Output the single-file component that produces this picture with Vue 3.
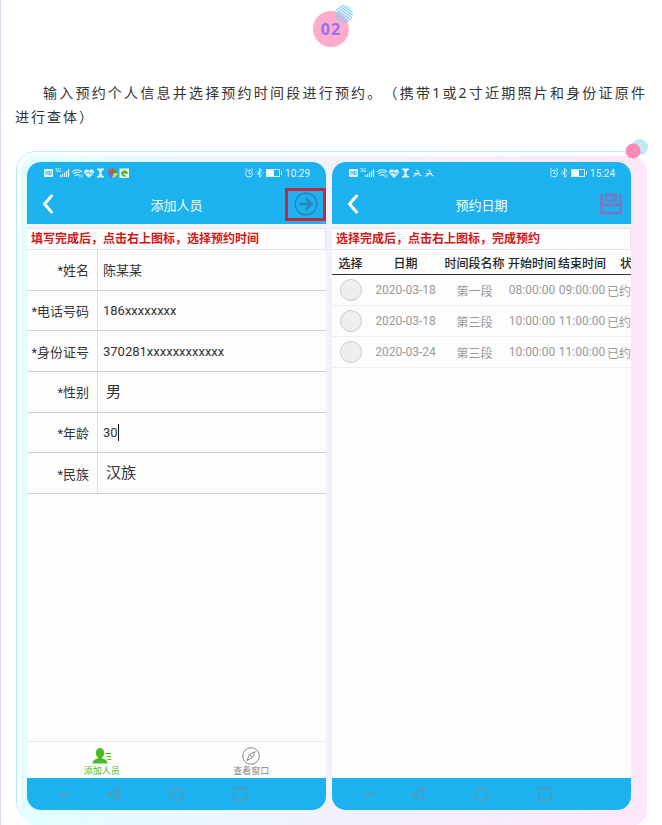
<script setup>
import { ref } from 'vue'

// 两个手机界面
const phones = [
  { id: 'person', title: '添加人员', time: '10:29', tip: '填写完成后，点击右上图标，选择预约时间' },
  { id: 'date', title: '预约日期', time: '15:24', tip: '选择完成后，点击右上图标，完成预约' },
]

// 表单字段
const fields = ref([
  { key: 'name', label: '姓名', value: '陈某某' },
  { key: 'phone', label: '电话号码', value: '186xxxxxxxx' },
  { key: 'idcard', label: '身份证号', value: '370281xxxxxxxxxxxx' },
  { key: 'sex', label: '性别', value: '男', options: ['男', '女'] },
  { key: 'age', label: '年龄', value: '30', active: true },
  { key: 'nation', label: '民族', value: '汉族', options: ['汉族', '其他'] },
])

const columns = ['选择', '日期', '时间段名称', '开始时间', '结束时间', '状态']

const slots = [
  { id: 1, date: '2020-03-18', name: '第一段', start: '08:00:00', end: '09:00:00', state: '已约6' },
  { id: 2, date: '2020-03-18', name: '第三段', start: '10:00:00', end: '11:00:00', state: '已约6' },
  { id: 3, date: '2020-03-24', name: '第三段', start: '10:00:00', end: '11:00:00', state: '已约4' },
]

const selectedSlot = ref(null)
</script>

<template>
  <main class="page">
    <div class="step">
      <span class="step-num">02</span>
      <svg class="step-dot" viewBox="0 0 18 18">
        <defs>
          <pattern id="stripe" width="3" height="2.4" patternUnits="userSpaceOnUse" patternTransform="rotate(35)">
            <rect width="3" height="1.4" fill="#8fcdf5" />
          </pattern>
        </defs>
        <circle cx="9" cy="9" r="9" fill="url(#stripe)" />
      </svg>
    </div>

    <p class="intro">输入预约个人信息并选择预约时间段进行预约。（携带1或2寸近期照片和身份证原件进行查体）</p>

    <section class="frame">
      <svg class="frame-dot" viewBox="0 0 24 22">
        <defs>
          <pattern id="stripe-small" width="2.4" height="2" patternUnits="userSpaceOnUse" patternTransform="rotate(40)">
            <rect width="2.4" height="1.2" fill="#9bd6ea" />
          </pattern>
        </defs>
        <circle cx="15" cy="8" r="8" fill="url(#stripe-small)" />
        <circle cx="8" cy="12" r="7.5" fill="#ff8ab8" />
      </svg>

      <article v-for="phone in phones" :key="phone.id" class="phone">
        <header class="phone-head">
          <div class="status">
            <svg class="status-left" width="88" height="12" viewBox="0 0 88 12">
              <rect x="1" y="2" width="9" height="8" rx="1" fill="#e3f6fd" />
              <text x="2" y="8" font-size="5" font-weight="700" fill="#1bb2ef">HD</text>
              <text x="12" y="5" font-size="5" fill="#e3f6fd">5G</text>
              <path d="M17.5 10V8M19.5 10V7M21.5 10V5.500M23.500 10V4M25.500 10V2" stroke="#e3f6fd" stroke-width="1.200" />
              <g fill="none" stroke="#e3f6fd" stroke-width="1.100">
                <path d="M29 5Q34 .5 39 5M30.500 7Q34 3.500 37 6M32 9Q34 6.500 36 8.500" />
                <path d="M37 7.500V10.500M39 7.500V10.500" stroke-width=".8" />
              </g>
              <path d="M46 11L41.500 6.500C40 4 43 .8 46 3.500C49 .8 52 4 50.500 6.500Z" fill="#e3f6fd" />
              <path d="M42 6H45L46 4.500L47 7.500L48 6H50" fill="none" stroke="#1bb2ef" stroke-width=".8" />
              <path d="M54 1.500H61V3H59.500Q59.500 5 58 6Q59.500 7 59.500 9H61V10.500H54V9H55.500Q55.500 7 57 6Q55.500 5 55.500 3H54Z" fill="#e3f6fd" />
              <template v-if="phone.id === 'person'">
                <path d="M65 6A4.500 4.500 0 0 1 70 1.500L71 6Z" fill="#e24b3b" />
                <path d="M70 1.500A4.500 4.500 0 0 1 74.500 6L70 6.500Z" fill="#32a852" />
                <path d="M74.500 6A4.500 4.500 0 0 1 69 10.500L69 6Z" fill="#e8d34a" />
                <path d="M69 10.500A4.500 4.500 0 0 1 65 5.500L71 6Z" fill="#3f7fd6" />
                <rect x="76.500" y="1.500" width="9.500" height="9.500" fill="#effce8" />
                <path d="M79 6H84A2.500 2.500 0 1 0 83 8.500" fill="none" stroke="#49a92c" stroke-width="1.500" />
              </template>
              <g v-else fill="none" stroke="#e3f6fd" stroke-width="1">
                <path d="M68 3L71 4.500L67 8M65 9Q68 10 69.500 6Q71 9 74 9M66 6.500H72" />
                <path d="M80 3L83 4.500L79 8M77 9Q80 10 81.500 6Q83 9 86 9M78 6.500H84" />
              </g>
            </svg>
            <svg class="status-right" width="38" height="12" viewBox="0 0 38 12">
              <g fill="none" stroke="#d5f1fc">
                <circle cx="5" cy="6.500" r="3.500" />
                <path d="M5 4.500V6.800H7M.8 3L2.800 1.300M7.200 1.300L9.200 3" />
                <path d="M13 4L18 8.500L15.500 10.500V1.500L18 3.500L13 8M11.500 6H12.500M18.500 6H19.500" stroke-width=".9" />
                <rect x="22.500" y="2.500" width="13" height="7" />
                <path d="M37.500 4V8" />
              </g>
              <rect x="23" y="3" width="7" height="6" fill="#f2fbff" />
            </svg>
            <span>{{ phone.time }}</span>
          </div>
          <div class="bar">
            <button class="bar-btn" aria-label="返回">
              <svg width="12" height="20" viewBox="0 0 12 20">
                <path d="M9.500 2L2.500 10L9.500 18" fill="none" stroke="#fff" stroke-width="3" stroke-linecap="round" />
              </svg>
            </button>
            <h2>{{ phone.title }}</h2>
            <button v-if="phone.id === 'person'" class="bar-btn marked" aria-label="下一步">
              <svg width="24" height="24" viewBox="0 0 24 24" fill="none" stroke="#2f80b8">
                <circle cx="12" cy="12" r="10.800" stroke-width="1.400" />
                <path d="M5.500 12H17M12 6.500L17.500 12L12 17.500" stroke-width="2.600" />
              </svg>
            </button>
            <button v-else class="bar-btn" aria-label="保存">
              <svg width="22" height="22" viewBox="0 0 22 22" fill="none" stroke="#8371bd">
                <path d="M1.500 1V20H20.500V1M1.500 12H20.500" stroke-width="2.500" />
                <path d="M6 1V7.500H16V1M5 1.500H17" stroke-width="1.800" />
                <path d="M12.500 2V6" stroke-width="2" />
              </svg>
            </button>
          </div>
        </header>

        <p class="tip">{{ phone.tip }}</p>

        <form v-if="phone.id === 'person'" class="form" @submit.prevent>
          <div v-for="field in fields" :key="field.key" class="row">
            <label :for="field.key">*{{ field.label }}</label>
            <div class="control" :class="{ active: field.active }">
              <select v-if="field.options" :id="field.key" v-model="field.value">
                <option v-for="option in field.options" :key="option">{{ option }}</option>
              </select>
              <input v-else :id="field.key" v-model="field.value" type="text">
            </div>
          </div>
        </form>

        <div v-else class="table-wrap">
          <table>
            <thead>
              <tr>
                <th v-for="column in columns" :key="column">{{ column }}</th>
              </tr>
            </thead>
            <tbody>
              <tr v-for="slot in slots" :key="slot.id">
                <td>
                  <input v-model="selectedSlot" type="radio" name="slot" :value="slot.id" :aria-label="slot.date + slot.name">
                </td>
                <td>{{ slot.date }}</td>
                <td>{{ slot.name }}</td>
                <td>{{ slot.start }}</td>
                <td>{{ slot.end }}</td>
                <td>{{ slot.state }}</td>
              </tr>
            </tbody>
          </table>
        </div>

        <nav v-if="phone.id === 'person'" class="tabs">
          <a href="#" class="on">
            <svg width="20" height="18" viewBox="0 0 20 18">
              <ellipse cx="8" cy="6" rx="4.200" ry="5" fill="currentColor" />
              <path d="M6 9H10V11.500Q15.500 12.500 15.500 16.500H.5Q.5 12.500 6 11.500Z" fill="currentColor" />
              <path d="M13.500 6.500H19M14.500 9.500H19M15.500 12.500H19" stroke="currentColor" stroke-width="1.200" />
            </svg>
            添加人员
          </a>
          <a href="#">
            <svg width="20" height="18" viewBox="0 0 20 18" fill="none" stroke="currentColor">
              <circle cx="10" cy="9" r="8.300" />
              <path d="M14 4.500L11.500 10.500L6 13.500L8.500 7.500ZM8.500 7.500L11.500 10.500" />
            </svg>
            查看窗口
          </a>
        </nav>

        <footer class="keys">
          <svg width="230" height="20" viewBox="0 0 230 20" fill="none" stroke="#5897af" stroke-width="1.500">
            <path d="M33 8L37.500 12L42 8" stroke-width="2" />
            <path d="M91.500 3.500V16.500L80.500 10Z" />
            <circle cx="149.500" cy="10" r="6.500" />
            <rect x="207" y="4" width="12" height="12" />
          </svg>
        </footer>
      </article>
    </section>
  </main>
</template>

<style>
body {
  margin: 0;
  background: #fff;
}
</style>

<style scoped>
.page {
  box-sizing: border-box;
  border-left: 1px solid #dccffa;
  padding: 11px 15px 4px 14px;
  overflow: hidden;
  font-family: Roboto, "Noto Sans CJK SC", sans-serif;
}

.step {
  position: relative;
  width: 36px;
  height: 36px;
  margin: 0 auto;
  border-radius: 50%;
  background: #ffabcc;
  text-align: center;
}

.step-num {
  color: #9371f5;
  font: 700 16px/36px "Noto Sans", sans-serif;
  letter-spacing: 1px;
}

.step-dot {
  position: absolute;
  top: -6px;
  right: -4px;
  width: 18px;
  height: 18px;
}

.intro {
  margin: 34px 0 22px;
  color: #333;
  font-family: "Noto Sans", "Noto Sans CJK SC", sans-serif;
  font-size: 14px;
  line-height: 24px;
  letter-spacing: 2px;
  text-align: justify;
  text-indent: 28px;
  text-spacing-trim: space-all;
}

.frame {
  position: relative;
  z-index: 0;
  display: flex;
  gap: 6px;
  margin: 0 5px 0 1px;
  padding: 10px;
  border: 1px solid #b2effb;
  border-radius: 20px;
}

/* 错位的渐变底 */
.frame::before {
  content: '';
  position: absolute;
  z-index: -1;
  inset: 4px -6px -6px 4px;
  border-radius: 16px;
  background: linear-gradient(to right, #e2ffff, #f1f1fd 50%, #fde6f9);
}

.frame-dot {
  position: absolute;
  top: -13px;
  right: -8px;
  width: 24px;
  height: 22px;
}

.phone {
  flex: 1;
  min-width: 0;
  min-height: 648px;
  display: flex;
  flex-direction: column;
  border-radius: 14px;
  overflow: hidden;
  background: #fdfdfd;
}

.phone-head {
  height: 62px;
  background: #1bb2ef;
  color: #fff;
}

.status {
  display: flex;
  align-items: center;
  height: 22px;
  padding: 0 16px;
  font-size: 10px;
  color: #e3f6fd;
}

.status-right {
  margin-left: auto;
  margin-right: 3px;
}

.bar {
  display: grid;
  grid-template-columns: 41px 1fr 41px;
  align-items: center;
  height: 40px;
}

.bar h2 {
  margin: 0;
  font-size: 13px;
  font-weight: 400;
  text-align: center;
}

.bar-btn {
  display: flex;
  align-items: center;
  justify-content: center;
  height: 33px;
  padding: 0;
  border: 0;
  background: none;
}

.marked {
  border: 3px solid #c4263f;
}

.tip {
  margin: 4px 0 0;
  padding: 0 4px;
  border: 1px solid #e3e3e3;
  border-left: 0;
  color: #d01818;
  font-size: 12px;
  font-weight: 700;
  line-height: 20px;
  box-shadow: 0 -4px #f0f2f3;
}

.form {
  display: grid;
  grid-auto-rows: 1fr;
  height: 244px;
}

.row {
  display: flex;
  border-bottom: 1px solid #d2d2d2;
  color: #333;
  font-size: 13px;
}

.row label {
  flex: none;
  display: flex;
  align-items: center;
  justify-content: flex-end;
  width: 62px;
  padding-right: 8px;
  border-right: 1px solid #dedede;
}

.control {
  flex: 1;
  display: flex;
  align-items: center;
  padding-left: 5px;
}

.control input,
.control select {
  width: 100%;
  padding: 0;
  border: 0;
  outline: 0;
  background: none;
  color: #333;
  font: inherit;
}

.control select {
  appearance: none;
  padding-left: 3px;
  font-size: 15px;
}

.active input {
  width: 15px;
}

.active::after {
  content: '';
  width: 1px;
  height: 17px;
  background: #111;
}

.table-wrap {
  overflow: hidden;
}

table {
  table-layout: fixed;
  width: 324px;
  border-collapse: collapse;
  font-size: 12px;
  text-align: center;
}

th,
td {
  padding: 0;
  white-space: nowrap;
}

th {
  width: 50px;
  height: 24px;
  border-bottom: 1px solid #333;
  color: #222;
  font-weight: 500;
}

th:nth-child(1) {
  width: 37px;
}

th:nth-child(2) {
  width: 73px;
}

th:nth-child(3) {
  width: 65px;
}

td {
  height: 30px;
  border-bottom: 1px solid #eee;
  color: #999;
}

td:last-child {
  text-align: left;
}

td input {
  appearance: none;
  display: block;
  width: 22px;
  height: 22px;
  margin: 0 auto;
  border: 1px solid #ccc;
  border-radius: 50%;
  background: #eee;
}

.tabs {
  display: flex;
  height: 36px;
  margin-top: auto;
  border-top: 1px solid #e6e6e6;
}

.tabs a {
  flex: 1;
  display: flex;
  flex-direction: column;
  align-items: center;
  padding-top: 5px;
  color: #888;
  font-size: 9px;
  line-height: 12px;
  text-decoration: none;
}

.tabs .on {
  color: #49bb23;
}

.keys {
  display: flex;
  align-items: center;
  height: 32px;
  background: #1bb2ef;
}

.table-wrap + .keys {
  margin-top: auto;
}
</style>
